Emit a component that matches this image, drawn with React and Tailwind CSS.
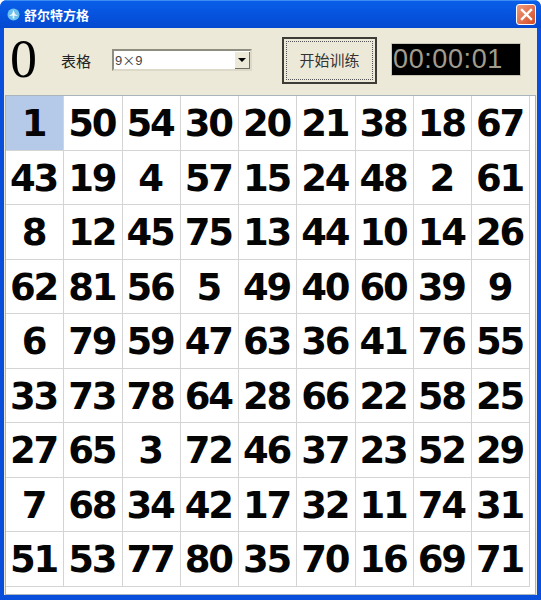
const rows = [
  [1, 50, 54, 30, 20, 21, 38, 18, 67],
  [43, 19, 4, 57, 15, 24, 48, 2, 61],
  [8, 12, 45, 75, 13, 44, 10, 14, 26],
  [62, 81, 56, 5, 49, 40, 60, 39, 9],
  [6, 79, 59, 47, 63, 36, 41, 76, 55],
  [33, 73, 78, 64, 28, 66, 22, 58, 25],
  [27, 65, 3, 72, 46, 37, 23, 52, 29],
  [7, 68, 34, 42, 17, 32, 11, 74, 31],
  [51, 53, 77, 80, 35, 70, 16, 69, 71],
];
const cjk = '"Noto Sans CJK SC", "Liberation Sans", sans-serif';

export default function App() {
  return (
    <div className="w-[541px] h-[600px] flex flex-col overflow-hidden rounded-t-[7px] bg-[#0a4fdc]" style={{ fontFamily: cjk }}>
      <div className="h-[28px] shrink-0 flex items-center pl-[7px] pr-[5px] bg-gradient-to-b from-[#0a5ee8] via-[#0653de] to-[#0548d0] border-t border-[#3d8df5]">
        <svg width="13" height="13" viewBox="0 0 13 13" className="mr-[4px]">
          <circle cx="6.5" cy="6.5" r="6" fill="#6cc0ec" />
          <path d="M6.5 2 L8 6 L11 8 L6.5 7.5 L2 8 L5 6 Z" fill="#f4fbff" />
          <rect x="5.7" y="7" width="1.6" height="3.5" fill="#f4fbff" />
        </svg>
        <span className="text-[13px] leading-none font-bold text-white tracking-normal">舒尔特方格</span>
        <div className="ml-auto w-[20px] h-[21px] rounded-[3px] border border-white bg-gradient-to-br from-[#ee9a7c] to-[#d4481f] flex items-center justify-center">
          <svg width="13" height="13" viewBox="0 0 13 13">
            <path d="M2 2 L11 11 M11 2 L2 11" stroke="#fff" strokeWidth="2.4" strokeLinecap="square" />
          </svg>
        </div>
      </div>
      <div className="flex-1 min-h-0 flex flex-col mx-[4px] mb-[5px] bg-[#ece9d8]">
        <div className="h-[67px] shrink-0 flex items-center">
          <span className="ml-[6px] w-[26px] text-[54px] leading-none text-black -mt-[5px]" style={{ fontFamily: '"Liberation Serif", serif' }}>0</span>
          <span className="ml-[25px] text-[15px] leading-none text-[#222] -mt-[3px]">表格</span>
          <div className="ml-[21px] -mt-[3px] w-[140px] h-[22px] flex items-center bg-white border-2 border-t-[#8f8c80] border-l-[#8f8c80] border-r-[#ddd9c8] border-b-[#ddd9c8]">
            <span className="ml-[1px] text-[13px] leading-none text-[#444]" style={{ fontFamily: '"Liberation Sans", "Noto Sans CJK SC", sans-serif' }}>9<span style={{ fontFamily: cjk }}>×</span>9</span>
            <div className="ml-auto w-[15px] h-[17px] flex items-center justify-center bg-[#ece9d8] border-r border-b border-[#716f64]">
              <div className="w-0 h-0 border-x-[4px] border-x-transparent border-t-[4px] border-t-black" />
            </div>
          </div>
          <div className="ml-[30px] w-[95px] h-[47px] -mt-[3px] p-[2px] border-2 border-[#3d3c36] bg-[#ece9d8]">
            <div className="w-full h-full border border-dotted border-[#555] flex items-center justify-center text-[15px] leading-none text-[#333] pb-[2px]">开始训练</div>
          </div>
          <div className="ml-[14px] w-[130px] h-[33px] -mt-[4px] bg-black border border-[#c8c5b5] flex items-center pl-[1px] text-[27px] leading-none text-[#a09c8e] tracking-[0.6px]" style={{ fontFamily: '"Liberation Sans", sans-serif' }}>00:00:01</div>
        </div>
        <div className="flex-1 min-h-0 mx-[1px] bg-white border-t border-l border-r border-b border-[#a8b4be]">
          <div className="grid grid-cols-[repeat(9,58.25px)] grid-rows-[repeat(9,54.5px)]">
            {rows.flat().map((n, i) => (
              <div
                key={n}
                className={`flex items-center justify-center border-r border-b border-[#d4d4d4] text-[37px] tracking-[-2px] font-bold leading-none text-[#050505] pt-[2px] pr-[2px] ${i === 0 ? "bg-[#b5c9e8]" : ""}`}
                style={{ fontFamily: '"DejaVu Sans", sans-serif' }}
              >
                {n}
              </div>
            ))}
          </div>
        </div>
      </div>
    </div>
  );
}
